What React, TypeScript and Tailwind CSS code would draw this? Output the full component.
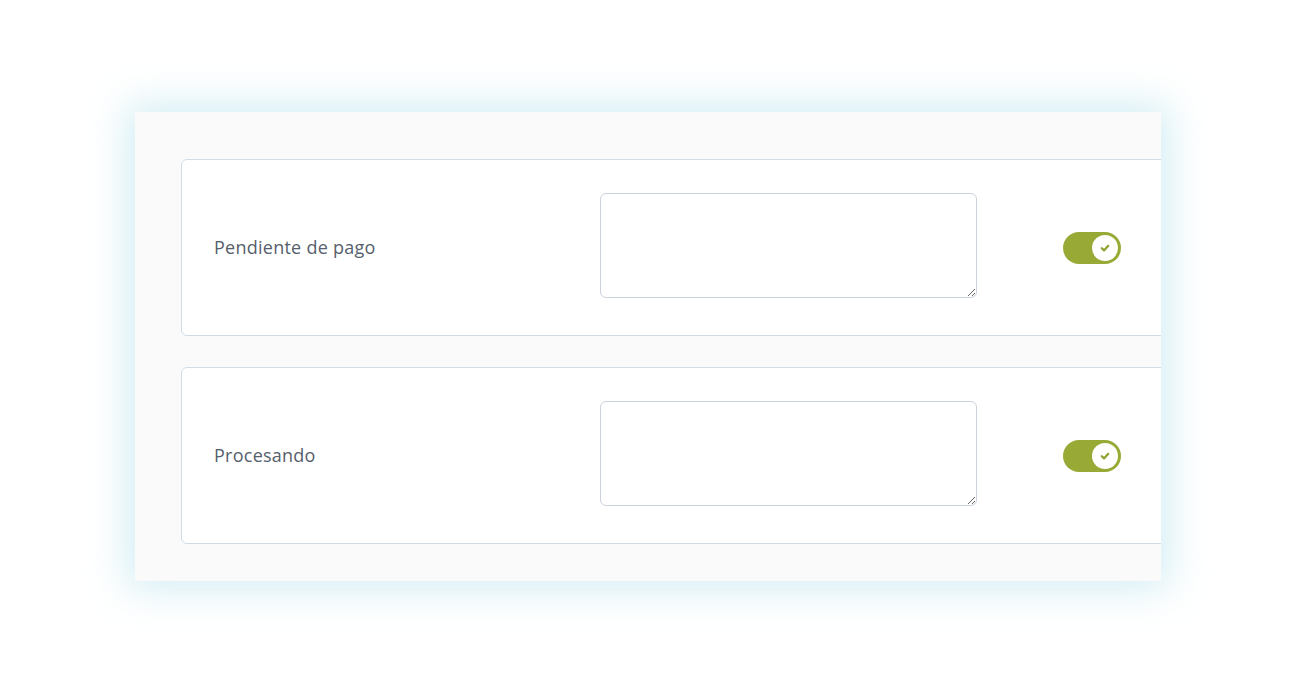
import React from "react";

function Toggle() {
  return (
    <div className="flex h-[32px] w-[58px] items-center justify-end rounded-full bg-[#98aa35] pr-[3px]">
      <div className="flex h-[26px] w-[26px] items-center justify-center rounded-full bg-white">
        <svg width="12" height="12" viewBox="0 0 12 12" fill="none">
          <path d="M2.8 6.2l2.2 2.2 4.2-4.6" stroke="#8fa22c" strokeWidth="2.2" strokeLinecap="round" strokeLinejoin="round" />
        </svg>
      </div>
    </div>
  );
}

function StatusRow({ label }: { label: string }) {
  return (
    <div className="flex h-[177px] w-[1010px] shrink-0 items-center rounded-[6px] border border-[#d3dce6] bg-white pl-[32px]">
      <div className="w-[386px] text-[18px] tracking-[0.25px] text-[#56606c]">{label}</div>
      <textarea className="mb-[4px] h-[105px] w-[377px] resize-y rounded-[6px] border border-[#cbd2db] bg-white" />
      <div className="ml-[86px]">
        <Toggle />
      </div>
    </div>
  );
}

export default function App() {
  return (
    <div className="h-[691px] w-[1300px] bg-white pt-[112px] pl-[135px] font-['Open_Sans','Noto_Sans',sans-serif]">
      <div className="flex h-[469px] w-[1026px] flex-col gap-[31px] overflow-hidden bg-[#fafafa] pt-[47px] pl-[46px] shadow-[0_0_36px_8px_rgba(198,232,240,0.75)]">
        <StatusRow label="Pendiente de pago" />
        <StatusRow label="Procesando" />
      </div>
    </div>
  );
}
